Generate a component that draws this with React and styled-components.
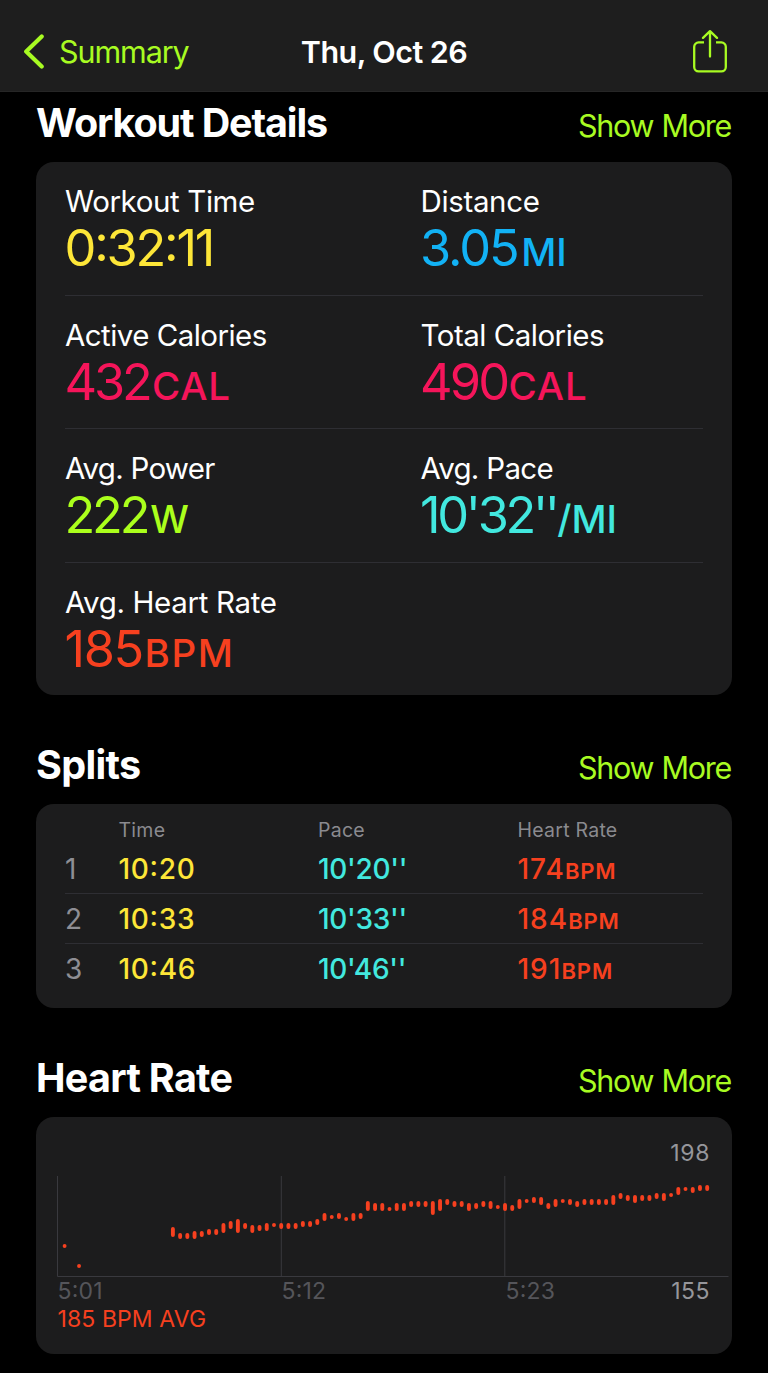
import styled, { createGlobalStyle } from "styled-components"

const colors = {
    lime: "#a8fb22",
    yellow: "#fde638",
    blue: "#12b2f5",
    pink: "#f5155a",
    green: "#abff1c",
    cyan: "#42e8df",
    red: "#f6401f",
    card: "#1c1c1d",
    line: "#2e2e33",
}

const GlobalStyle = createGlobalStyle`
    body {
        margin: 0;
        background: #000;
        color: #fff;
        font-family: Inter, "Liberation Sans", sans-serif;
        font-feature-settings: "calt" 1;
        overflow: hidden;
    }
`

const Page = styled.div`
    width: 768px;
    height: 1373px;
    overflow: hidden;
    background: #000;
`

const Header = styled.header`
    display: grid;
    grid-template-columns: 1fr auto 1fr;
    align-items: center;
    box-sizing: border-box;
    height: 92px;
    padding: 12px 23px 0;
    background: #1e1e1e;
    border-bottom: 1px solid #262626;
`

const BackLink = styled.a`
    display: flex;
    align-items: center;
    gap: 14px;
    color: ${colors.lime};
    font-size: 30.5px;
    line-height: 40px;
    letter-spacing: -1.1px;
`

const HeaderTitle = styled.h1`
    margin: 0;
    font-size: 30.5px;
    line-height: 40px;
    font-weight: 600;
    letter-spacing: -0.56px;
`

const ShareButton = styled.button`
    justify-self: end;
    display: flex;
    margin-right: 17px;
    padding: 0;
    border: 0;
    background: none;
    color: ${colors.lime};
`

const Section = styled.section`
    width: 696px;
    margin: ${props => props.$top}px auto 0;
`

const SectionHead = styled.div`
    display: flex;
    align-items: baseline;
    justify-content: space-between;
    height: 48px;
    margin-bottom: 15.4px;
`

const SectionTitle = styled.h2`
    margin: 0;
    font-size: 39.5px;
    line-height: 48px;
    font-weight: 700;
    letter-spacing: ${props => props.$track}px;
`

const ShowMore = styled.a`
    color: ${colors.lime};
    font-size: 30.5px;
    letter-spacing: -1.27px;
    word-spacing: 1px;
    margin-right: 1px;
`

const Card = styled.div`
    box-sizing: border-box;
    height: ${props => props.$height}px;
    border-radius: 18px;
    background: ${colors.card};
`

const MetricRow = styled.div`
    display: grid;
    grid-template-columns: 355.5px 1fr;
    box-sizing: border-box;
    height: 133.4px;
    margin: 0 29px;
    padding-top: 21px;
    border-bottom: 1px solid ${colors.line};
    &:last-child {
        border-bottom: 0;
    }
`

const MetricLabel = styled.div`
    font-size: 29.5px;
    line-height: 36px;
    letter-spacing: ${props => props.$track}px;
    white-space: nowrap;
`

const MetricValue = styled.div`
    margin-left: -0.5px;
    color: ${props => colors[props.$color]};
    font-size: 50.5px;
    line-height: 57px;
    letter-spacing: ${props => props.$track}px;
    white-space: nowrap;
`

const MetricUnit = styled.span`
    margin-left: ${props => props.$gap}px;
    font-size: 38.5px;
    font-weight: 500;
    letter-spacing: ${props => props.$track}px;
`

const SplitRow = styled.div`
    display: grid;
    grid-template-columns: 53.5px 199.5px 199.5px 1fr;
    box-sizing: border-box;
    height: 50.3px;
    margin: 0 29px;
    padding-top: 8.4px;
    border-bottom: 1px solid ${colors.line};
    font-size: 28px;
    line-height: 34px;
    white-space: nowrap;
    &:last-child {
        border-bottom: 0;
    }
`

const SplitHead = styled(SplitRow)`
    height: 39px;
    padding-top: 14px;
    border-bottom: 0;
    color: #8a8a8f;
    font-size: 19.5px;
    line-height: 24px;
    letter-spacing: 0.25px;
`

const SplitIndex = styled.span`
    color: #8e8e94;
`

const SplitValue = styled.span`
    color: ${props => colors[props.$color]};
    font-weight: 500;
    letter-spacing: ${props => props.$track}px;
`

const SplitUnit = styled.span`
    font-size: 22px;
    font-weight: 600;
    letter-spacing: 0.9px;
`

const ChartCard = styled(Card)`
    padding-top: 21.6px;
    font-size: 23px;
    line-height: 28px;
`

const ChartMax = styled.div`
    padding-right: 22px;
    text-align: right;
    color: #96969b;
    letter-spacing: 0.6px;
`

const Plot = styled.svg`
    display: block;
`

const AxisRow = styled.div`
    display: grid;
    grid-template-columns: 224px 224px 1fr auto;
    padding: 0 22px 0 21.5px;
    color: #55555a;
    letter-spacing: 0.2px;
`

const AxisMin = styled.span`
    color: #96969b;
    letter-spacing: 0.5px;
`

const ChartAverage = styled.div`
    padding-left: 21.5px;
    color: ${colors.red};
    letter-spacing: 0.1px;
`

const metrics = [
    [
        { label: "Workout Time", track: -0.4, color: "yellow", value: "0:32:11", valueTrack: -2.2 },
        { label: "Distance", track: -0.35, color: "blue", value: "3.05", valueTrack: -2.06, unit: "MI", gap: 3.5, unitTrack: 0 },
    ],
    [
        { label: "Active Calories", track: -0.55, color: "pink", value: "432", valueTrack: -3.2, unit: "CAL", gap: 2.5, unitTrack: 0.8 },
        { label: "Total Calories", track: -0.51, color: "pink", value: "490", valueTrack: -2.9, unit: "CAL", gap: 1.5, unitTrack: 0.8 },
    ],
    [
        { label: "Avg. Power", track: -0.75, color: "green", value: "222", valueTrack: -3.2, unit: "W", gap: 3, unitTrack: 0 },
        { label: "Avg. Pace", track: -0.7, color: "cyan", value: "10'32''", valueTrack: -3.3, unit: "/MI", gap: 0.5, unitTrack: 0 },
    ],
    [
        { label: "Avg. Heart Rate", track: -0.34, color: "red", value: "185", valueTrack: -1.4, unit: "BPM", gap: 1.8, unitTrack: 1.6 },
    ],
]

const splits = [
    { time: "10:20", pace: "10'20''", rate: 174 },
    { time: "10:33", pace: "10'33''", rate: 184 },
    { time: "10:46", pace: "10'46''", rate: 191 },
]

// [low, high] beats per minute, one entry per sample slot
const samples = [
    [168.5, 168.5], null, [158.5, 158.5], ...Array(12).fill(null),
    [174, 177], [173, 174], [173, 174], [173, 175], [174, 175],
    [175, 176], [175, 176], [176, 179], [178, 180], [176, 181],
    [178, 179], [176, 178], [177, 178], [177, 179], [179, 179],
    [178, 179], [178, 179], [178, 179], [179, 180], [179, 180],
    [180, 181], [182, 184], [183, 183], [183, 184], [182, 182],
    [182, 184], [183, 184], [187, 190], [187, 189], [187, 189],
    [187, 187], [187, 189], [187, 189], [189, 190], [189, 190],
    [189, 190], [185, 190], [187, 191], [190, 191], [189, 190],
    [189, 190], [187, 189], [188, 189], [189, 190], [188, 190],
    [188, 188], [187, 189], [187, 188], [188, 191], [191, 191],
    [191, 192], [190, 192], [188, 189], [189, 191], [191, 191],
    [190, 191], [189, 190], [190, 191], [190, 191], [190, 191],
    [190, 191], [190, 193], [193, 194], [192, 193], [191, 193],
    [192, 193], [192, 193], [193, 194], [192, 194], [194, 194],
    [195, 197], [197, 197], [196, 197], [197, 198], [197, 198],
]

const plotX = i => 28.6 + i * 7.22
const plotY = bpm => 20 + (198 - bpm) * 2

function HeartRatePlot() {
    return (
        <Plot width="696" height="110" viewBox="0 0 696 110">
            <g stroke="#39393e" strokeWidth="1">
                <path d="M21.5 9V109.5H692.5" fill="none" />
                <path d="M245.3 9V109M468.8 9V109" />
            </g>
            <g stroke={colors.red} strokeWidth="3.9" strokeLinecap="round">
                {samples.map((sample, i) => sample && (
                    <path key={i} d={`M${plotX(i)} ${plotY(sample[1])}V${plotY(sample[0]) + 0.01}`} />
                ))}
            </g>
        </Plot>
    )
}

function Metric({ label, track, color, value, valueTrack, unit, gap, unitTrack }) {
    return (
        <div>
            <MetricLabel $track={track}>{label}</MetricLabel>
            <MetricValue $color={color} $track={valueTrack}>
                {value}
                {unit && <MetricUnit $gap={gap} $track={unitTrack}>{unit}</MetricUnit>}
            </MetricValue>
        </div>
    )
}

function App() {
    return (
        <Page>
            <GlobalStyle />
            <Header>
                <BackLink>
                    <svg width="22" height="36" viewBox="0 0 22 36" fill="none" stroke="currentColor" strokeWidth="4.2" strokeLinecap="round" strokeLinejoin="round">
                        <path d="M18.7 2.5L3.2 17.5L18.7 32.5" />
                    </svg>
                    Summary
                </BackLink>
                <HeaderTitle>Thu, Oct 26</HeaderTitle>
                <ShareButton aria-label="Share">
                    <svg width="36" height="44" viewBox="0 0 36 44" fill="none" stroke="currentColor" strokeWidth="2.3" strokeLinecap="round" strokeLinejoin="round">
                        <path d="M12 12.4H6.6A4.4 4.4 0 0 0 2.2 16.8V37A4.4 4.4 0 0 0 6.6 41.4H29.4A4.4 4.4 0 0 0 33.8 37V16.8A4.4 4.4 0 0 0 29.4 12.4H24" strokeLinecap="butt" />
                        <path d="M18 26.5V1.2M11 7.9L18 1.2L25 7.9" />
                    </svg>
                </ShareButton>
            </Header>

            <Section $top={7}>
                <SectionHead>
                    <SectionTitle $track={-1.12}>Workout Details</SectionTitle>
                    <ShowMore>Show More</ShowMore>
                </SectionHead>
                <Card $height={533}>
                    {metrics.map((row, i) => (
                        <MetricRow key={i}>
                            {row.map(metric => <Metric key={metric.label} {...metric} />)}
                        </MetricRow>
                    ))}
                </Card>
            </Section>

            <Section $top={45.6}>
                <SectionHead>
                    <SectionTitle $track={-0.67}>Splits</SectionTitle>
                    <ShowMore>Show More</ShowMore>
                </SectionHead>
                <Card $height={204}>
                    <SplitHead>
                        <span />
                        <span>Time</span>
                        <span>Pace</span>
                        <span>Heart Rate</span>
                    </SplitHead>
                    {splits.map((split, i) => (
                        <SplitRow key={i}>
                            <SplitIndex>{i + 1}</SplitIndex>
                            <SplitValue $color="yellow" $track={0.7}>{split.time}</SplitValue>
                            <SplitValue $color="cyan" $track={-0.3}>{split.pace}</SplitValue>
                            <SplitValue $color="red" $track={1}>
                                {split.rate}<SplitUnit>BPM</SplitUnit>
                            </SplitValue>
                        </SplitRow>
                    ))}
                </Card>
            </Section>

            <Section $top={45.6}>
                <SectionHead>
                    <SectionTitle $track={-0.7}>Heart Rate</SectionTitle>
                    <ShowMore>Show More</ShowMore>
                </SectionHead>
                <ChartCard $height={237}>
                    <ChartMax>198</ChartMax>
                    <HeartRatePlot />
                    <AxisRow>
                        <span>5:01</span>
                        <span>5:12</span>
                        <span>5:23</span>
                        <AxisMin>155</AxisMin>
                    </AxisRow>
                    <ChartAverage>185 BPM AVG</ChartAverage>
                </ChartCard>
            </Section>
        </Page>
    )
}

export default App
